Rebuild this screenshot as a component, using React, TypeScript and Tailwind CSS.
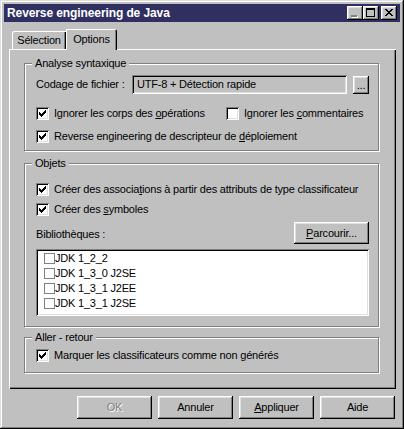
import React from 'react';

const raised = 'shadow-[inset_-1px_-1px_0_#000,inset_1px_1px_0_#fff,inset_-2px_-2px_0_#808080,inset_2px_2px_0_#dfdfdf]';
const sunken = 'shadow-[inset_1px_1px_0_#808080,inset_-1px_-1px_0_#fff,inset_2px_2px_0_#000,inset_-2px_-2px_0_#dfdfdf]';
const etched = 'border border-[#808080] shadow-[1px_1px_0_#fff,inset_1px_1px_0_#fff]';

const CHECK = ['......#', '.....##', '#...###', '##.###.', '#####..', '.###...', '..#....'];

const CheckMark: React.FC = () => (
    <svg width="7" height="7" viewBox="0 0 7 7" shapeRendering="crispEdges">
        {CHECK.flatMap((row, y) =>
            row.split('').map((c, x) =>
                c === '#' ? <rect key={`${x}-${y}`} x={x} y={y} width="1" height="1" fill="#000" /> : null
            )
        )}
    </svg>
);

const Checkbox: React.FC<{ checked?: boolean }> = ({ checked }) => (
    <span className={`flex h-[13px] w-[13px] shrink-0 items-center justify-center bg-white ${sunken}`}>
        {checked && <CheckMark />}
    </span>
);

const CheckRow: React.FC<{ checked?: boolean; children: React.ReactNode; className?: string }> = ({ checked, children, className = '' }) => (
    <div className={`flex h-[13px] items-center ${className}`}>
        <Checkbox checked={checked} />
        <span className="ml-[5px] whitespace-nowrap leading-[13px]">{children}</span>
    </div>
);

const Group: React.FC<{ label: string; className: string; children: React.ReactNode }> = ({ label, className, children }) => (
    <div className={`relative w-[355px] ${etched} ${className}`}>
        <span className="absolute left-[7px] top-[-7px] bg-[#c0c0c0] px-[3px] leading-[13px]">{label}</span>
        {children}
    </div>
);

const Button: React.FC<{ children: React.ReactNode; disabled?: boolean }> = ({ children, disabled }) => (
    <button
        className={`flex h-[23px] w-[75px] items-center justify-center bg-[#c0c0c0] ${raised} ${
            disabled ? 'text-[#808080] [text-shadow:1px_1px_0_#fff]' : 'text-black'
        }`}
    >
        {children}
    </button>
);

const CaptionButton: React.FC<{ children: React.ReactNode; className?: string }> = ({ children, className = '' }) => (
    <div className={`flex h-[14px] w-[16px] items-center justify-center bg-[#c0c0c0] ${raised} ${className}`}>{children}</div>
);

const libraries = ['JDK 1_2_2', 'JDK 1_3_0 J2SE', 'JDK 1_3_1 J2EE', 'JDK 1_3_1 J2SE'];

export default function App() {
    return (
        <div
            className="flex h-[429px] w-[404px] flex-col bg-[#c0c0c0] p-[4px] text-[11px] tracking-[-0.2px] text-black shadow-[inset_-1px_-1px_0_#000,inset_1px_1px_0_#dfdfdf,inset_-2px_-2px_0_#808080,inset_2px_2px_0_#fff]"
            style={{ fontFamily: '"Liberation Sans", Arial, sans-serif' }}
        >
            {/* title bar */}
            <div className="flex h-[18px] items-center bg-[#302f61] pl-[3px] pr-[3px]">
                <span className="flex-1 text-[12px] font-bold leading-[18px] tracking-[-0.1px] text-white">Reverse engineering de Java</span>
                <CaptionButton>
                    <svg width="16" height="14" viewBox="0 0 16 14" shapeRendering="crispEdges">
                        <rect x="5" y="10" width="6" height="2" fill="#fff" />
                        <rect x="4" y="9" width="6" height="2" fill="#808080" />
                    </svg>
                </CaptionButton>
                <CaptionButton>
                    <svg width="16" height="14" viewBox="0 0 16 14" shapeRendering="crispEdges">
                        <rect x="3.5" y="2.5" width="8" height="8" fill="none" stroke="#000" />
                        <rect x="3" y="3" width="9" height="1" fill="#000" />
                    </svg>
                </CaptionButton>
                <CaptionButton className="ml-[2px]">
                    <svg width="16" height="14" viewBox="0 0 16 14" shapeRendering="crispEdges">
                        <path d="M4 3h2v1h1v1h2V4h1V3h2v1h-1v1h-1v1h-1v1h1v1h1v1h1v1h-2V9H9V8H7v1H6v1H4V9h1V8h1V7h1V6H6V5H5V4H4z" fill="#000" />
                    </svg>
                </CaptionButton>
            </div>

            {/* tabs */}
            <div className="mt-[7px] flex h-[20px] items-end pl-[8px]">
                <div className="flex h-[18px] w-[54px] items-center justify-center rounded-tl-[2px] bg-[#c0c0c0] shadow-[inset_1px_1px_0_#fff,inset_-1px_0_0_#000,inset_-2px_0_0_#808080]">
                    Sélection
                </div>
                <div className="relative z-10 mb-[-1px] flex h-[21px] w-[51px] items-center justify-center rounded-tr-[2px] bg-[#c0c0c0] pb-[1px] shadow-[inset_1px_1px_0_#fff,inset_-1px_0_0_#000,inset_-2px_0_0_#808080]">
                    Options
                </div>
            </div>

            {/* panel */}
            <div className="ml-[5px] flex h-[340px] w-[387px] flex-col pl-[15px] pt-[14px] shadow-[inset_1px_1px_0_#fff,inset_-1px_-1px_0_#000,inset_-2px_-2px_0_#808080]">
                <Group label="Analyse syntaxique" className="h-[88px] pl-[11px] pt-[11px]">
                    <div className="flex items-center">
                        <span className="w-[96px] whitespace-nowrap">Codage de fichier :</span>
                        <div className={`flex h-[19px] w-[215px] items-center pl-[5px] ${sunken}`}>UTF-8 + Détection rapide</div>
                        <div className={`ml-[6px] flex h-[18px] w-[16px] items-end justify-center pb-[3px] leading-none ${raised}`}>...</div>
                    </div>
                    <div className="mt-[13px] flex">
                        <CheckRow checked className="w-[190px]">
                            Ignorer les corps des <span className="underline">o</span>pérations
                        </CheckRow>
                        <CheckRow>
                            Ignorer les <span className="underline">c</span>ommentaires
                        </CheckRow>
                    </div>
                    <CheckRow checked className="mt-[10px]">
                        Reverse engineering de descripteur de <span className="underline">d</span>éploiement
                    </CheckRow>
                </Group>

                <Group label="Objets" className="mt-[12px] h-[164px] pl-[11px] pt-[19px]">
                    <CheckRow checked>
                        Créer des associa<span className="underline">t</span>ions à partir des attributs de type classificateur
                    </CheckRow>
                    <CheckRow checked className="mt-[7px]">
                        Créer des <span className="underline">s</span>ymboles
                    </CheckRow>
                    <div className="mt-[6px] flex h-[22px] w-[333px] items-center justify-between">
                        <span className="pt-[3px]">Bibliothèques :</span>
                        <div className={`flex h-[22px] w-[75px] items-center justify-center ${raised}`}>
                            <span>
                                <span className="underline">P</span>arcourir...
                            </span>
                        </div>
                    </div>
                    <div className={`mt-[5px] h-[67px] w-[333px] bg-white p-[2px] ${sunken}`}>
                        {libraries.map(lib => (
                            <div key={lib} className="flex h-[15px] items-center pl-[6px]">
                                <span className="h-[11px] w-[11px] border border-[#808080] bg-white" />
                                <span className="whitespace-nowrap">{lib}</span>
                            </div>
                        ))}
                    </div>
                </Group>

                <Group label="Aller - retour" className="mt-[10px] h-[36px] pl-[11px] pt-[11px]">
                    <CheckRow checked>
                        Marquer les classificateurs comme non <span className="underline">g</span>énérés
                    </CheckRow>
                </Group>
            </div>

            {/* buttons */}
            <div className="mt-[7px] flex justify-end gap-[6px] pr-[5px]">
                <Button disabled>OK</Button>
                <Button>Annuler</Button>
                <Button>
                    <span>
                        <span className="underline">A</span>ppliquer
                    </span>
                </Button>
                <Button>Aide</Button>
            </div>
        </div>
    );
}
